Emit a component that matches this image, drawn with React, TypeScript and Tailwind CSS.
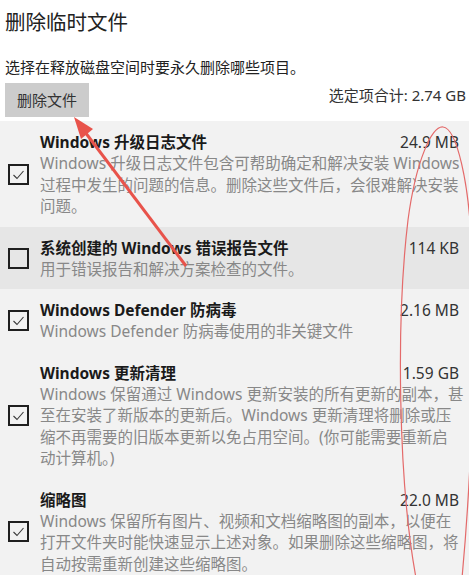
import React from "react";

type Item = {
  title: string;
  size: string;
  lines: string[];
  checked: boolean;
  hover?: boolean;
};

const items: Item[] = [
  {
    title: "Windows 升级日志文件",
    size: "24.9 MB",
    lines: [
      "Windows 升级日志文件包含可帮助确定和解决安装 Windows",
      "过程中发生的问题的信息。删除这些文件后，会很难解决安装",
      "问题。",
    ],
    checked: true,
  },
  {
    title: "系统创建的 Windows 错误报告文件",
    size: "114 KB",
    lines: ["用于错误报告和解决方案检查的文件。"],
    checked: false,
    hover: true,
  },
  {
    title: "Windows Defender 防病毒",
    size: "2.16 MB",
    lines: ["Windows Defender 防病毒使用的非关键文件"],
    checked: true,
  },
  {
    title: "Windows 更新清理",
    size: "1.59 GB",
    lines: [
      "Windows 保留通过 Windows 更新安装的所有更新的副本，甚",
      "至在安装了新版本的更新后。Windows 更新清理将删除或压",
      "缩不再需要的旧版本更新以免占用空间。(你可能需要重新启",
      "动计算机。)",
    ],
    checked: true,
  },
  {
    title: "缩略图",
    size: "22.0 MB",
    lines: [
      "Windows 保留所有图片、视频和文档缩略图的副本，以便在",
      "打开文件夹时能快速显示上述对象。如果删除这些缩略图，将",
      "自动按需重新创建这些缩略图。",
    ],
    checked: true,
  },
];

const CheckBox = ({ checked }: { checked: boolean }) => (
  <div className="w-[21px] h-[21px] shrink-0 border-2 border-[#1f1f1f] flex items-center justify-center">
    {checked && (
      <svg width="17" height="17" viewBox="0 0 17 17" fill="none">
        <polyline
          points="3.5,9 7,12.5 13.5,5"
          stroke="#3a3a3a"
          strokeWidth="1.1"
        />
      </svg>
    )}
  </div>
);

const Row = ({ item }: { item: Item }) => (
  <div
    className={`flex items-center pl-[8px] pr-[10px] pt-[10px] pb-[9px] ${
      item.hover ? "bg-[#e6e6e6]" : "bg-[#f2f2f2]"
    }`}
  >
    <CheckBox checked={item.checked} />
    <div className="ml-[11px] flex-1 min-w-0">
      <div className="flex h-[22px] items-center justify-between">
        <span className="text-[15.5px] leading-[22px] font-bold text-[#1a1a1a]">
          {item.title}
        </span>
        <span className="text-[15.5px] leading-[22px] text-[#333]">{item.size}</span>
      </div>
      {item.lines.map((l, i) => (
        <div
          key={i}
          className="h-[21.5px] text-[15.5px] leading-[21.5px] text-[#888888] whitespace-nowrap"
        >
          {l}
        </div>
      ))}
    </div>
  </div>
);

export default function App() {
  return (
    <div
      className="relative w-[469px] h-[575px] overflow-hidden bg-white"
      style={{ fontFamily: '"Noto Sans", "Noto Sans CJK SC", sans-serif' }}
    >
      <div className="pl-[5px] pr-[3px] pt-[8px]">
        <h1 className="text-[20.5px] leading-[28px] text-[#222]">删除临时文件</h1>
        <p className="mt-[21px] text-[15px] leading-[20px] text-[#222]">
          选择在释放磁盘空间时要永久删除哪些项目。
        </p>
        <div className="mt-[6px] flex items-start justify-between">
          <button className="w-[84px] h-[34px] bg-[#cccccc] text-[15px] text-[#333]">
            删除文件
          </button>
          <span className="mt-[2px] text-[15px] leading-[20px] text-[#333]">
            选定项合计: 2.74 GB
          </span>
        </div>
      </div>

      <div className="mt-[4px] bg-[#f2f2f2] pb-[20px]">
        {items.map((item) => (
          <Row key={item.title} item={item} />
        ))}
      </div>

      {/* red annotations */}
      <svg
        className="absolute left-0 top-0 pointer-events-none"
        width="469"
        height="575"
        viewBox="0 0 469 575"
        fill="none"
      >
        <line x1="186" y1="266" x2="82" y2="128" stroke="#e8534b" strokeWidth="3" />
        <polygon points="74,117 93,129 81,139" fill="#e8534b" />
        <path
          d="M 416 578 C 398 480, 396 320, 408 220 C 416 160, 432 126, 443 127 C 456 128, 470 180, 472 260 C 474 380, 472 470, 462 578"
          stroke="#e46a6a"
          strokeWidth="1.2"
        />
      </svg>
    </div>
  );
}
